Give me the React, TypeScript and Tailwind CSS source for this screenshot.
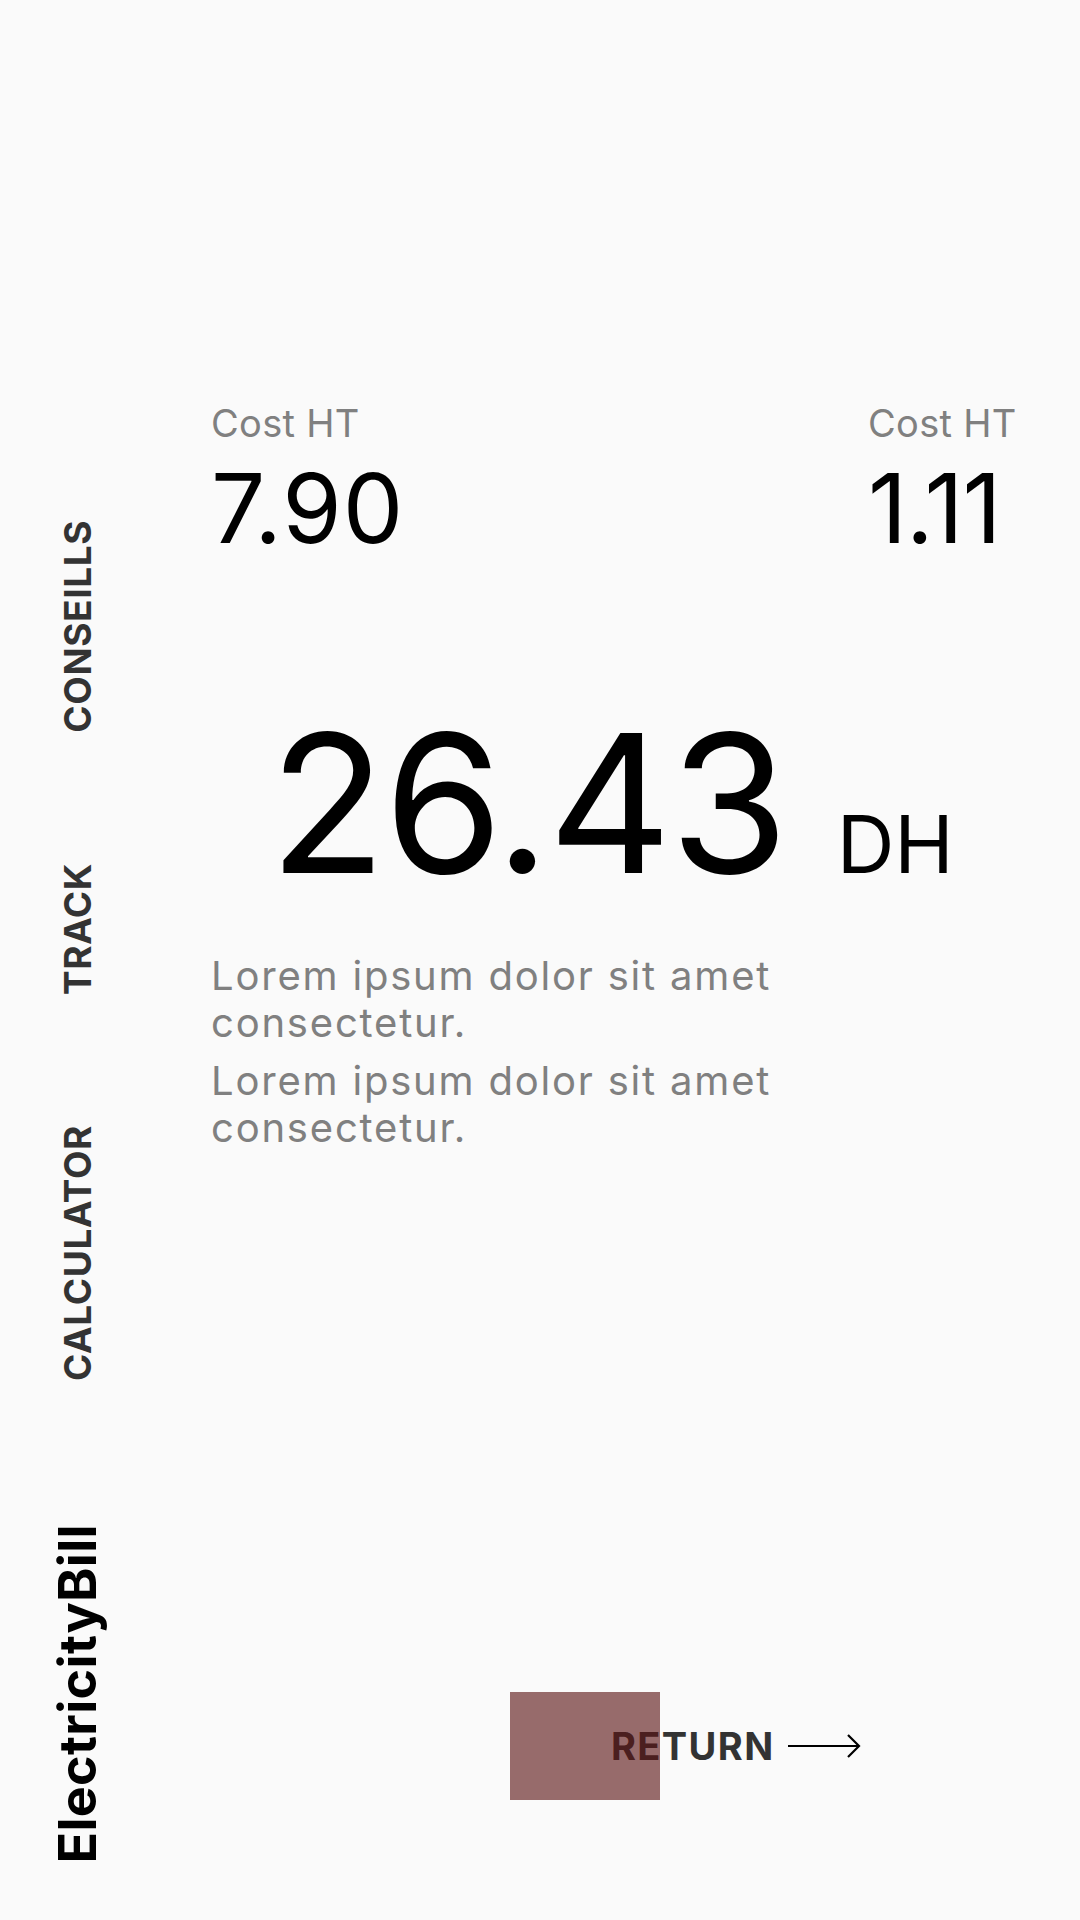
import React from "react";

const navItems = ["CONSEILLS", "TRACK", "CALCULATOR"];

export default function App() {
  return (
    <div className="flex h-[1920px] w-[1080px] bg-[#fafafa] font-['Inter',sans-serif] overflow-hidden">
      {/* Sidebar */}
      <aside className="flex w-[156px] flex-col items-center pt-[520px]">
        <div className="flex flex-col items-center gap-[130px]">
          {navItems.map((item) => (
            <span
              key={item}
              className="rotate-180 text-[37px] leading-[40px] font-bold tracking-[0.6px] text-[#333333] [writing-mode:vertical-rl]"
            >
              {item}
            </span>
          ))}
        </div>
        <span className="mt-[143px] rotate-180 text-[52px] leading-[54px] font-bold tracking-[0.3px] text-black [writing-mode:vertical-rl]">
          ElectricityBill
        </span>
      </aside>

      {/* Main */}
      <main className="flex flex-1 flex-col pl-[55px] pr-[63px] pt-[400px] pb-[120px]">
        <div className="flex justify-between">
          <div className="flex flex-col">
            <span className="text-[38px] leading-[46px] tracking-[0.3px] text-[#808080]">Cost HT</span>
            <span className="mt-[14px] text-[96px] leading-[96px] tracking-[1px] text-black">7.90</span>
          </div>
          <div className="flex w-[149px] flex-col">
            <span className="text-[38px] leading-[46px] tracking-[0.3px] text-[#808080]">Cost HT</span>
            <span className="mt-[14px] text-[96px] leading-[96px] tracking-[-1px] text-black">1.11</span>
          </div>
        </div>

        <div className="mt-[151px] flex items-baseline pl-[58px]">
          <span className="text-[192px] leading-[192px] tracking-[-2px] text-black">26.43</span>
          <span className="ml-[50px] text-[80px] leading-[80px] text-black">DH</span>
        </div>

        <div className="mt-[53px] flex max-w-[640px] flex-col gap-[11px] text-[40px] leading-[47px] tracking-[1.8px] text-[#808080]">
          <p>Lorem ipsum dolor sit amet consectetur.</p>
          <p>Lorem ipsum dolor sit amet consectetur.</p>
        </div>

        <div className="relative mt-auto ml-[299px] flex h-[108px] items-center pl-[101px]">
          <span className="text-[38px] leading-[46px] font-bold tracking-[1.4px] text-[#333333]">RETURN</span>
          <svg className="ml-[12px]" width="74" height="24" viewBox="0 0 74 24" fill="none">
            <path d="M1 12H72M61 1L72 12L61 23" stroke="black" strokeWidth="2.2" />
          </svg>
          <div className="absolute left-0 top-0 h-[108px] w-[150px] bg-[rgba(90,19,19,0.62)]" />
        </div>
      </main>
    </div>
  );
}
